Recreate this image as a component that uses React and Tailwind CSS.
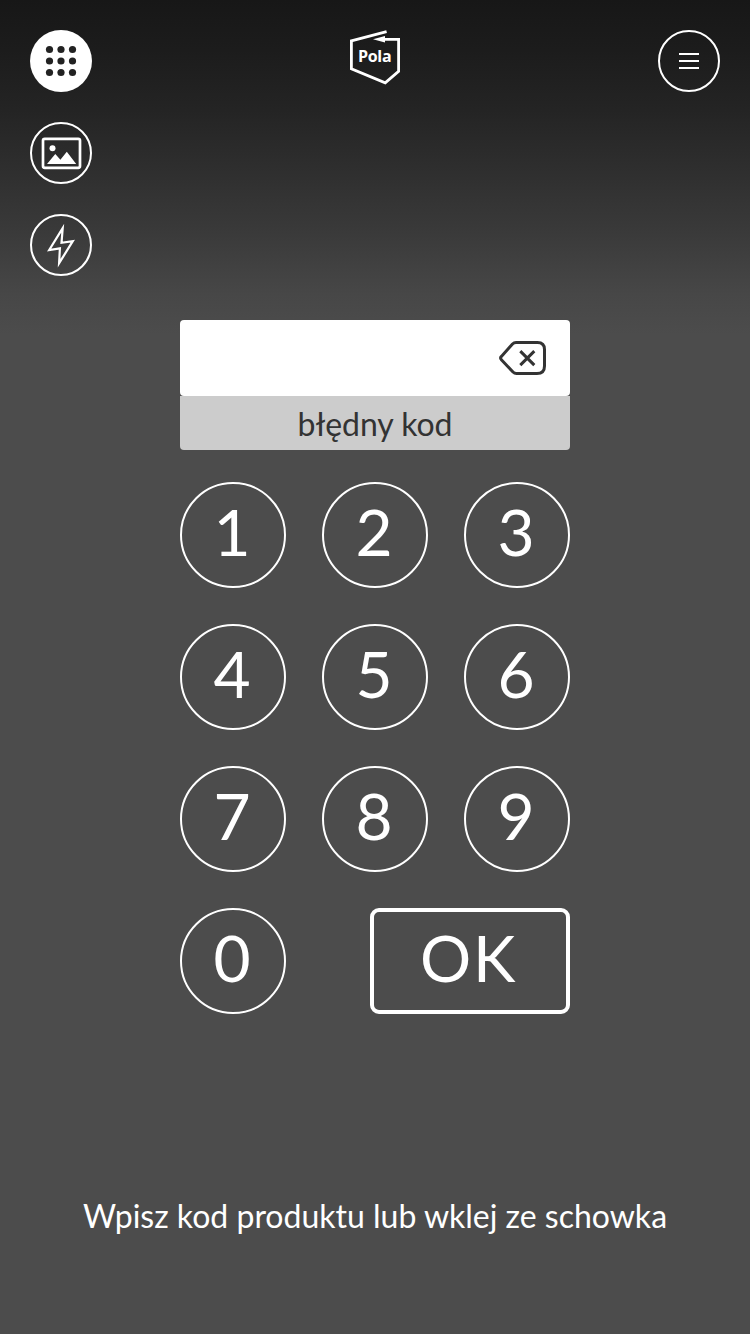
const ROUND = 'flex h-[62px] w-[62px] items-center justify-center rounded-full';

function Keypad() {
  return (
    <svg className="shrink-0" width="62" height="62" viewBox="0 0 62 62" fill="#222222">
      {[19.5, 31, 42.5].map((y) =>
        [19.5, 31, 42.5].map((x) => <circle key={`${x}-${y}`} cx={x} cy={y} r="3.6" />)
      )}
    </svg>
  );
}

function Logo() {
  return (
    <div className="relative mt-[-1px] h-[56px] w-[52px]">
      <svg width="52" height="56" viewBox="0 0 52 56" fill="none" stroke="#fff" strokeWidth="2.8">
        <path d="M37.6 2.6 L2.4 11.8 V39.7 L36.2 53.8 L49.6 42.4 V10.3 H32" />
        <path d="M24 10.2 L36 7 V13.6 Z" fill="#fff" stroke="none" />
      </svg>
      <span className="absolute left-[9px] top-[18px] font-['Open_Sans'] text-[16px] leading-[18px] font-bold tracking-[-0.3px] text-white">Pola</span>
    </div>
  );
}

function Picture() {
  return (
    <svg className="shrink-0" width="62" height="62" viewBox="0 0 62 62" fill="none">
      <rect x="13" y="16.8" width="37" height="29" rx="1.8" stroke="#fff" strokeWidth="2.7" />
      <circle cx="22.5" cy="26.2" r="3" fill="#fff" />
      <path d="M17 41.9 L25.3 32 L30.4 37.8 L36.8 29.8 L46.2 41.9 Z" fill="#fff" />
    </svg>
  );
}

function Flash() {
  return (
    <svg className="shrink-0" width="62" height="62" viewBox="0 0 62 62" fill="none" stroke="#fff" strokeWidth="2.2">
      <path d="M32.7 14.2 L19.2 36 L29.9 34.4 L29.1 49.2 L42.8 27.2 L31.5 28.8 Z" strokeMiterlimit="10" />
    </svg>
  );
}

function Backspace() {
  return (
    <svg className="shrink-0" width="48" height="36" viewBox="0 0 48 36" fill="none" stroke="#333" strokeWidth="3">
      <path d="M17 2.5 H38.5 Q45.5 2.5 45.5 9.5 V26 Q45.5 33.5 38 33.5 H17.5 Q15.5 33.5 14 32 L2.4 19.8 Q0.8 18 2.4 16.4 L13.5 4 Q15 2.5 17 2.5 Z" />
      <path d="M21.3 11.1 L35.3 25.1 M35.3 11.1 L21.3 25.1" />
    </svg>
  );
}

export default function App() {
  return (
    <main className="flex h-[1334px] w-[750px] flex-col items-center bg-[#4c4c4c] bg-[linear-gradient(to_bottom,#171717_0px,#1c1c1c_50px,#242424_110px,#2e2e2e_167px,#3a3a3a_233px,#474747_295px,#4c4c4c_334px)] font-[Lato,sans-serif] text-white">
      <header className="flex h-[320px] w-full items-start justify-between px-[30px] pt-[30px]">
        <nav className="flex flex-col gap-[30px]">
          <button className={`${ROUND} bg-white`} aria-label="Klawiatura"><Keypad /></button>
          <button className={`${ROUND} border-2 border-white`} aria-label="Galeria"><Picture /></button>
          <button className={`${ROUND} border-2 border-white`} aria-label="Latarka"><Flash /></button>
        </nav>
        <Logo />
        <button className={`${ROUND} flex-col gap-[5px] border-2 border-white`} aria-label="Menu">
          <span className="h-[2px] w-5 bg-white" />
          <span className="h-[2px] w-5 bg-white" />
          <span className="h-[2px] w-5 bg-white" />
        </button>
      </header>

      <section className="flex w-[390px] flex-col">
        <div className="flex h-[76px] items-center justify-end rounded bg-white pr-[23px]"><Backspace /></div>
        <p className="h-[54px] rounded-b bg-[#cccccc] pt-[9px] text-center text-[32px] leading-[38px] tracking-[-0.05px] text-[#333333]">błędny kod</p>
        <div className="mt-8 grid grid-cols-3 gap-9">
          {[1, 2, 3, 4, 5, 6, 7, 8, 9, 0].map((n) => (
            <button key={n} className="h-[106px] w-[106px] rounded-full border-2 border-white pr-[2px] pb-[7px] text-[64px] leading-[64px]">{n}</button>
          ))}
          <button className="col-span-2 h-[106px] w-[200px] justify-self-end rounded-[9px] border-4 border-white pr-[3px] pb-[7px] text-[64px] leading-[64px] tracking-[1.6px]">OK</button>
        </div>
      </section>

      <p className="mt-[182px] text-[32px] leading-[40px]">Wpisz kod produktu lub wklej ze schowka</p>
    </main>
  );
}
